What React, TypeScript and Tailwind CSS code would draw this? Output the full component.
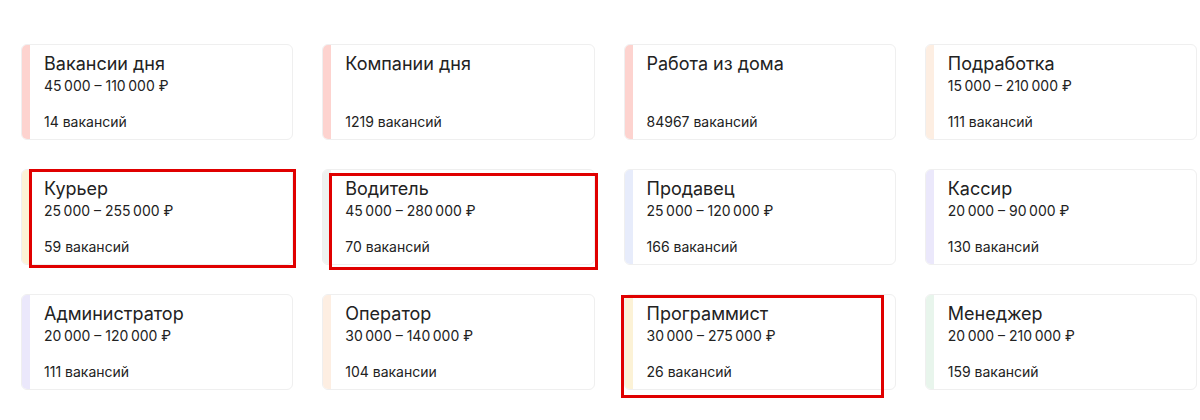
import React from "react";

type Card = { title: string; salary?: string; count: string; stripe: string };

const T = "\u2009";
const cards: Card[] = [
  { title: "Вакансии дня", salary: `45${T}000 – 110${T}000 ₽`, count: "14 вакансий", stripe: "bg-[#fdd3cf]" },
  { title: "Компании дня", count: "1219 вакансий", stripe: "bg-[#fdd3cf]" },
  { title: "Работа из дома", count: "84967 вакансий", stripe: "bg-[#fdd3cf]" },
  { title: "Подработка", salary: `15${T}000 – 210${T}000 ₽`, count: "111 вакансий", stripe: "bg-[#fdeee2]" },
  { title: "Курьер", salary: `25${T}000 – 255${T}000 ₽`, count: "59 вакансий", stripe: "bg-[#fcf2d6]" },
  { title: "Водитель", salary: `45${T}000 – 280${T}000 ₽`, count: "70 вакансий", stripe: "bg-[#eef2f0]" },
  { title: "Продавец", salary: `25${T}000 – 120${T}000 ₽`, count: "166 вакансий", stripe: "bg-[#e7ecfb]" },
  { title: "Кассир", salary: `20${T}000 – 90${T}000 ₽`, count: "130 вакансий", stripe: "bg-[#ebe8fb]" },
  { title: "Администратор", salary: `20${T}000 – 120${T}000 ₽`, count: "111 вакансий", stripe: "bg-[#ebe8fb]" },
  { title: "Оператор", salary: `30${T}000 – 140${T}000 ₽`, count: "104 вакансии", stripe: "bg-[#fdeee2]" },
  { title: "Программист", salary: `30${T}000 – 275${T}000 ₽`, count: "26 вакансий", stripe: "bg-[#fcf2d6]" },
  { title: "Менеджер", salary: `20${T}000 – 210${T}000 ₽`, count: "159 вакансий", stripe: "bg-[#e8f5ec]" },
];

export default function App() {
  return (
    <div
      className="relative w-[1200px] h-[420px] bg-white text-[#222]"
      style={{ fontFamily: "Inter, 'Noto Sans', sans-serif" }}
    >
      <div className="grid grid-cols-4 gap-x-[29px] gap-y-[29px] pl-[21px] pr-[3px] pt-[44px]">
        {cards.map((c) => (
          <div
            key={c.title}
            className="flex h-[96px] rounded-[6px] border border-[#efefef] overflow-hidden bg-white"
          >
            <div className={`w-[8px] shrink-0 ${c.stripe}`} />
            <div className="flex flex-col pl-[14px] pt-[7px] pb-[7px] flex-1">
              <div className="text-[18px] leading-[24px] text-[#222]">{c.title}</div>
              <div className="text-[14px] leading-[20px] text-[#222]">{c.salary ?? "\u00a0"}</div>
              <div className="mt-auto text-[14px] leading-[20px] text-[#222]">{c.count}</div>
            </div>
          </div>
        ))}
      </div>
      <div className="absolute left-[29px] top-[169px] w-[267px] h-[99px] border-[3px] border-[#e00000]" />
      <div className="absolute left-[329px] top-[173px] w-[269px] h-[97px] border-[3px] border-[#e00000]" />
      <div className="absolute left-[621px] top-[295px] w-[263px] h-[103px] border-[3px] border-[#e00000]" />
    </div>
  );
}
